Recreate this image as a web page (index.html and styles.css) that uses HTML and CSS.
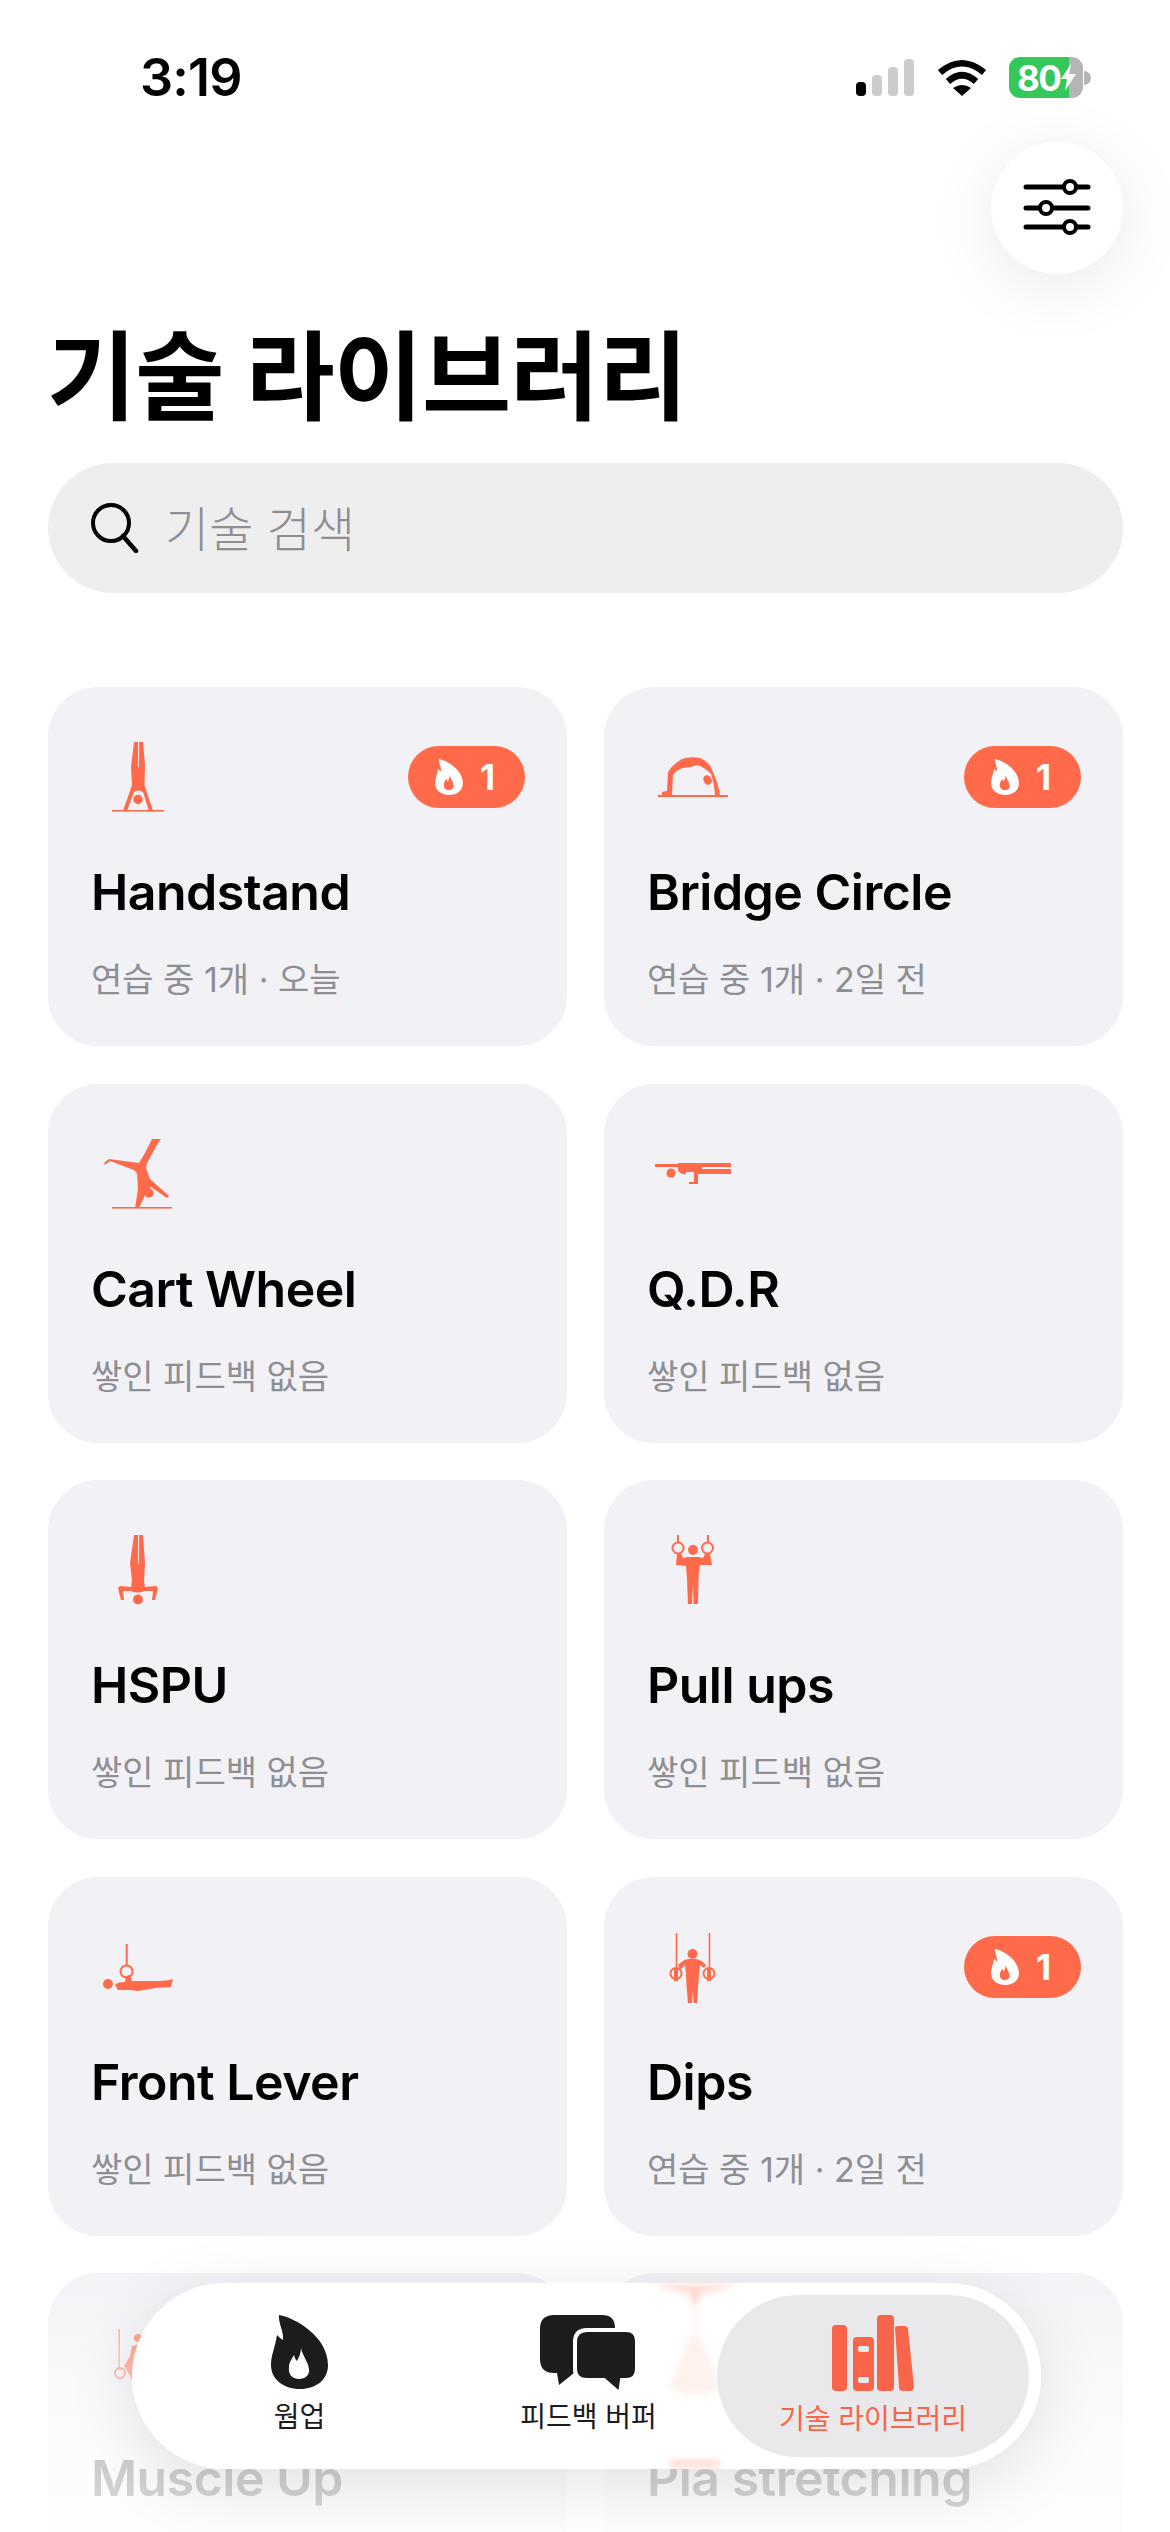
FILE: index.html
```html
<!DOCTYPE html>
<html lang="ko">
  <head>
    <meta charset="UTF-8" />
    <meta name="viewport" content="width=device-width, initial-scale=1.0" />
    <title>기술 라이브러리</title>

    <link rel="stylesheet" href="styles.css">
  </head>
  <body>
    <!-- Shared icons -->
    <svg class="sprite" width="0" height="0">
      <symbol id="flame" viewBox="0 0 57 74">
        <path fill-rule="evenodd" d="M8 0C25 3 57 22 57 50C57 65 45 74 29 74C12 74 0 64 0 50C0 40 4 33 6 20C8 22 10 24 12 25C13 16 7 8 8 0ZM30 33C31 40 37 46 38 54C39 60 34 64 28 64C21 64 17 59 18 52C18 47 21 44 23 40C24 44 25 45 26 46C28 42 30 38 30 33Z" />
      </symbol>
    </svg>

    <div class="page">
      <header class="status-bar">
        <span class="time">3:19</span>
        <div class="status-icons">
          <div class="signal">
            <span class="bar bar-1"></span>
            <span class="bar bar-2"></span>
            <span class="bar bar-3"></span>
            <span class="bar bar-4"></span>
          </div>
          <svg class="wifi" width="50" height="37" viewBox="0 0 50 37">
            <path d="M3 13.5Q25 -5 47 13.5" fill="none" stroke="#000" stroke-width="6.5" />
            <path d="M11 22.5Q25 10 39 22.5" fill="none" stroke="#000" stroke-width="6.5" />
            <path d="M16 29Q25 23 34 29L25 37Z" />
          </svg>
          <div class="battery">
            <div class="battery-body">
              <span class="battery-level">80</span>
              <svg class="bolt" width="15" height="27" viewBox="0 0 15 27">
                <path d="M10 0L0 15H6L4 27L15 10H8Z" fill="#fff" />
              </svg>
            </div>
            <span class="battery-cap"></span>
          </div>
        </div>
      </header>

      <div class="toolbar">
        <button class="filter-btn">
          <svg width="68" height="60" viewBox="0 0 68 60">
            <g stroke="#000" stroke-width="5" stroke-linecap="round">
              <path d="M3 9H65" />
              <path d="M3 30H65" />
              <path d="M3 49H65" />
            </g>
            <g fill="#fff" stroke="#000" stroke-width="4">
              <circle cx="47" cy="9" r="6" />
              <circle cx="23" cy="30" r="6" />
              <circle cx="47" cy="49" r="6" />
            </g>
          </svg>
        </button>
      </div>

      <h1 class="page-title">기술 라이브러리</h1>

      <div class="search">
        <svg width="50" height="50" viewBox="0 0 50 50">
          <circle cx="22" cy="20" r="18" fill="none" stroke="#000" stroke-width="4" />
          <path d="M34 33L47 48" stroke="#000" stroke-width="4.5" stroke-linecap="round" />
        </svg>
        <span class="search-text">기술 검색</span>
      </div>

      <main class="cards">
        <!-- Handstand -->
        <article class="card">
          <div class="card-top">
            <svg class="skill-icon" viewBox="0 0 100 100">
              <path d="M44 22L48 22L48.2 47L49 47L49.2 22L53 22L55 45L54.5 65L63 91L59 91L53 72Q48.5 69 44 72L37 91L33 91L42 65L41 47Z" />
              <circle cx="48" cy="79.5" r="4.7" />
              <rect x="22" y="90" width="52" height="1.6" />
            </svg>
            <span class="badge"><svg class="badge-flame" width="28" height="36"><use href="#flame" /></svg>1</span>
          </div>
          <h2 class="card-name">Handstand</h2>
          <p class="card-sub">연습 중 1개 · 오늘</p>
        </article>

        <!-- Bridge Circle -->
        <article class="card">
          <div class="card-top">
            <svg class="skill-icon" viewBox="6 0 100 100">
              <path d="M22 72L27 71L28 52Q33 44 42 39Q50 36 60 38Q69 41 72 50Q78 62 80 75L75 75Q74 62 71 54Q64 47 57 45Q50 48 43 48Q36 50 33 55L32 75L22 75Z" />
              <ellipse cx="67.5" cy="60" rx="4" ry="5" transform="rotate(-25 67.5 60)" />
              <rect x="18" y="75" width="70" height="2" />
            </svg>
            <span class="badge"><svg class="badge-flame" width="28" height="36"><use href="#flame" /></svg>1</span>
          </div>
          <h2 class="card-name">Bridge Circle</h2>
          <p class="card-sub">연습 중 1개 · 2일 전</p>
        </article>

        <!-- Cart Wheel -->
        <article class="card">
          <div class="card-top">
            <svg class="skill-icon" viewBox="0 -4 100 100">
              <path d="M62 18L71 18L68 22L57 42L56 47L60 58L79 75L77 77L61 66L56 72L49 87L45 87L48 68L47 52L44 49L20 40L15 44L14 42L19 38L49 42L55 32Z" />
              <circle cx="59" cy="72" r="4.7" />
              <rect x="22" y="86" width="60" height="1.6" />
            </svg>
          </div>
          <h2 class="card-name">Cart Wheel</h2>
          <p class="card-sub">쌓인 피드백 없음</p>
        </article>

        <!-- Q.D.R -->
        <article class="card">
          <div class="card-top">
            <svg class="skill-icon" viewBox="6 -4 100 100">
              <rect x="15" y="43" width="23" height="3" />
              <circle cx="31" cy="52" r="4.5" />
              <path d="M38 42H91V46H62V48H91V53H58V63H49V61H54V51H46V53H42L38 50Z" />
            </svg>
          </div>
          <h2 class="card-name">Q.D.R</h2>
          <p class="card-sub">쌓인 피드백 없음</p>
        </article>

        <!-- HSPU -->
        <article class="card">
          <div class="card-top">
            <svg class="skill-icon" viewBox="0 2 100 100">
              <path d="M44 24L48 24L48.2 53L49 53L49.2 24L53 24L55 52L54 70L55 76L66 75L68 77L65 89L62 89L63 80L55 80Q48 83 41 80L33 80L34 89L31 89L28 77L30 75L41 76L42 70L40 52Z" />
              <circle cx="48" cy="88.5" r="5" />
            </svg>
          </div>
          <h2 class="card-name">HSPU</h2>
          <p class="card-sub">쌓인 피드백 없음</p>
        </article>

        <!-- Pull ups -->
        <article class="card">
          <div class="card-top">
            <svg class="skill-icon" viewBox="6 2 100 100">
              <rect x="37" y="24" width="2" height="8" />
              <rect x="67" y="24" width="2" height="8" />
              <circle class="ring" cx="38" cy="37" r="5.5" />
              <circle class="ring" cx="67.5" cy="37" r="5.5" />
              <circle cx="53" cy="39" r="5" />
              <path d="M37 43L41 43L43 47L47 46L59 46L63 47L65 43L70 43L72 54L60 54Q59 60 58.5 66L58 93L53.5 93L53 72L52 93L48 93L47 68L46 55L36 54Z" />
            </svg>
          </div>
          <h2 class="card-name">Pull ups</h2>
          <p class="card-sub">쌓인 피드백 없음</p>
        </article>

        <!-- Front Lever -->
        <article class="card">
          <div class="card-top">
            <svg class="skill-icon" viewBox="0 -3 100 100">
              <rect x="35.7" y="31" width="2" height="22" />
              <circle class="ring" cx="36.5" cy="58.5" r="6" />
              <circle cx="18" cy="71" r="5" />
              <path d="M25 72Q27 69 35 69L36 63L40 62L42 68L70 68L80 67L83 66L81 74L65 75L48 78L40 77L28 77Z" />
            </svg>
          </div>
          <h2 class="card-name">Front Lever</h2>
          <p class="card-sub">쌓인 피드백 없음</p>
        </article>

        <!-- Dips -->
        <article class="card">
          <div class="card-top">
            <svg class="skill-icon" viewBox="6 -3 100 100">
              <rect x="35.7" y="20" width="1.6" height="34" />
              <rect x="68.7" y="20" width="1.6" height="34" />
              <circle class="ring" cx="36" cy="60.5" r="5.5" />
              <circle class="ring" cx="69" cy="60.5" r="5.5" />
              <circle cx="52.5" cy="41" r="5" />
              <rect x="34" y="56" width="4" height="12" />
              <rect x="67" y="56" width="4" height="12" />
              <path d="M38 52Q44 46 49 46L56 46Q62 47 66 52L64 55L60 52L59 62L58 75L57 90L53.5 90L53 78L52 90L48 90L46.5 72L46 62L45 52L40 57Z" />
            </svg>
            <span class="badge"><svg class="badge-flame" width="28" height="36"><use href="#flame" /></svg>1</span>
          </div>
          <h2 class="card-name">Dips</h2>
          <p class="card-sub">연습 중 1개 · 2일 전</p>
        </article>

        <!-- Muscle Up -->
        <article class="card">
          <div class="card-top">
            <svg class="skill-icon" viewBox="0 0 100 100">
              <rect x="28.5" y="23" width="1.2" height="40" />
              <circle class="ring" cx="30" cy="67" r="5" />
              <circle cx="48" cy="32" r="4" />
              <path d="M42 40L50 38L50 90L40 70L34 60L40 50Z" />
            </svg>
          </div>
          <h2 class="card-name">Muscle Up</h2>
        </article>

        <!-- Pia stretching -->
        <article class="card">
          <div class="card-top">
            <svg class="skill-icon" viewBox="6 0 100 100">
              <circle cx="54" cy="32" r="5" />
              <path d="M50 38H58L62 60L74 86H34L46 60Z" />
            </svg>
          </div>
          <h2 class="card-name">Pia stretching</h2>
        </article>
      </main>

      <div class="fade"></div>

      <nav class="tabbar">
        <!-- Pia stretching figure showing through the glass -->
        <svg class="glass-figure" width="90" height="186" viewBox="0 0 90 186">
          <path class="glass-strong" d="M2 2H88L52 10L45 14L38 10Z" />
          <circle class="glass-strong" cx="45" cy="16" r="5" />
          <rect x="43" y="24" width="4" height="24" />
          <path d="M37 60Q45 42 53 60L70 105Q45 118 20 105Z" />
          <rect class="glass-strong" x="20" y="177" width="50" height="7" rx="3" />
        </svg>

        <a class="tab tab-warmup">
          <svg width="57" height="74" fill="#1c1c1e"><use href="#flame" /></svg>
          <span class="tab-label">웜업</span>
        </a>
        <a class="tab tab-buffer">
          <svg width="97" height="77" viewBox="0 0 97 77">
            <path fill="#1c1c1e" d="M14 0H62Q75 0 75 13V58H34L19 70L17 58H14Q0 58 0 44V14Q0 0 14 0Z" />
            <path fill="#1c1c1e" stroke="#fff" stroke-width="4" d="M47 15H86Q97 15 97 26V54Q97 65 86 65H82L80 79L64 65H47Q35 65 35 54V27Q35 15 47 15Z" />
          </svg>
          <span class="tab-label">피드백 버퍼</span>
        </a>
        <a class="tab tab-active">
          <svg width="82" height="76" viewBox="0 0 82 76">
            <rect x="0" y="10" width="15" height="66" rx="4" />
            <rect x="21" y="22" width="21" height="54" rx="4" />
            <rect x="45" y="0" width="17" height="76" rx="4" />
            <path d="M63 13Q63 11 66 11L72 11Q76 11 76 14L82 72Q82 76 78 76L71 76Q67 76 67 72Z" />
            <rect class="book-label" x="26" y="31" width="11" height="6" rx="2" />
            <rect class="book-label" x="26" y="62" width="11" height="6" rx="2" />
          </svg>
          <span class="tab-label">기술 라이브러리</span>
        </a>
      </nav>
    </div>
  </body>
</html>
```

FILE: styles.css
```css
* {
  box-sizing: border-box;
}

body {
  background-color: #fff;
  margin: 0;
  overflow: hidden;
  font-family: Inter, 'Noto Sans CJK KR', sans-serif;
  color: #000;
}

h1,
h2,
p {
  margin: 0;
}

.sprite {
  position: absolute;
}

.page {
  position: relative;
  height: 2532px;
  overflow: hidden;
  padding: 0 47px 0 48px;
}

/* Status bar */

.status-bar {
  display: flex;
  justify-content: space-between;
  height: 142px;
  margin: 0 -47px 0 -48px;
  padding: 57px 79px 0 140px;
}

.time {
  font-size: 52px;
  font-weight: 600;
  line-height: 42px;
  letter-spacing: -0.8px;
}

.status-icons {
  display: flex;
  align-items: flex-start;
  height: 41px;
}

.signal {
  display: flex;
  align-items: flex-end;
  gap: 6px;
  height: 39px;
  margin-right: 23px;
}

.bar {
  width: 10px;
  border-radius: 4px;
  background-color: #ccc;
}

.bar-1 {
  height: 14px;
  background-color: #000;
}

.bar-2 {
  height: 21px;
}

.bar-3 {
  height: 29px;
}

.bar-4 {
  height: 37px;
}

.wifi {
  margin: 2px 22px 0 0;
}

.battery {
  display: flex;
  align-items: center;
}

.battery-body {
  display: flex;
  align-items: center;
  width: 74px;
  height: 41px;
  padding-left: 8px;
  border-radius: 11px;
  background: linear-gradient(to right, #34c759 60px, #b5b5b5 60px);
}

.battery-level {
  color: #fff;
  font-size: 35px;
  font-weight: 700;
  letter-spacing: -1.5px;
}

.bolt {
  margin-left: 1px;
  flex-shrink: 0;
}

.battery-cap {
  width: 7px;
  height: 14px;
  margin-left: 1px;
  border-radius: 0 7px 7px 0;
  background-color: #b5b5b5;
}

/* Header */

.toolbar {
  display: flex;
  justify-content: flex-end;
}

.filter-btn {
  display: flex;
  align-items: center;
  justify-content: center;
  width: 132px;
  height: 132px;
  padding: 0;
  border: 0;
  border-radius: 50%;
  background-color: #fff;
  box-shadow: 0 12px 70px rgba(0, 0, 0, 0.09);
}

.page-title {
  margin: 43px 0 0 -1px;
  font-size: 97px;
  font-weight: 700;
  line-height: 120px;
  letter-spacing: -1px;
  white-space: nowrap;
}

.search {
  display: flex;
  align-items: center;
  gap: 26px;
  height: 130px;
  margin-top: 26px;
  padding-left: 41px;
  border-radius: 65px;
  background-color: #eee;
}

.search-text {
  margin-top: -4px;
  color: #8e8e93;
  font-size: 48px;
  font-weight: 300;
}

/* Skill cards */

.cards {
  display: grid;
  grid-template-columns: 519px 519px;
  grid-auto-rows: 359px;
  gap: 37.5px 37px;
  margin-top: 94px;
}

.card {
  padding-left: 43px;
  border-radius: 50px;
  background-color: #f1f1f6;
}

.card-top {
  display: flex;
  justify-content: space-between;
  align-items: flex-start;
  height: 133px;
}

.skill-icon {
  width: 100px;
  height: 100px;
  margin: 33px 0 0 -1px;
  fill: #ff6b4a;
}

.skill-icon .ring {
  fill: none;
  stroke: #ff6b4a;
  stroke-width: 2;
}

.badge {
  display: flex;
  align-items: center;
  gap: 17px;
  height: 62px;
  margin: 59px 42px 0 0;
  padding: 0 30px 0 27px;
  border-radius: 31px;
  background-color: #ff6b4a;
  color: #fff;
  font-size: 35px;
  font-weight: 700;
}

.badge-flame {
  fill: #fff;
}

.card-name {
  margin-top: 42px;
  font-size: 50px;
  font-weight: 600;
  line-height: 60px;
  letter-spacing: -0.5px;
}

.card-sub {
  margin-top: 36px;
  color: #8e8e93;
  font-size: 34px;
  font-weight: 400;
  line-height: 44px;
}

/* Bottom fade and tab bar */

.fade {
  position: absolute;
  left: 0;
  right: 0;
  bottom: 0;
  height: 300px;
  background: linear-gradient(to bottom, rgba(255, 255, 255, 0), rgba(255, 255, 255, 0.35) 30%, rgba(255, 255, 255, 0.6) 50%, rgba(255, 255, 255, 0.8) 75%, rgba(255, 255, 255, 0.85));
}

.tabbar {
  position: absolute;
  left: 132px;
  top: 2283px;
  display: grid;
  grid-template-columns: 313px 261px 312px;
  width: 909px;
  height: 186px;
  padding: 12px 11px;
  border-radius: 93px;
  background-color: rgba(255, 255, 255, 0.97);
  box-shadow: 0 16px 70px rgba(0, 0, 0, 0.11);
}

.glass-figure {
  position: absolute;
  left: 518px;
  top: 0;
  fill: #fff1ed;
  filter: blur(3px);
}

.glass-strong {
  fill: #ffd9cf;
}

.tab {
  position: relative;
  display: flex;
  flex-direction: column;
  align-items: center;
  padding-top: 20px;
  color: #1c1c1e;
}

.tab-label {
  margin-top: 10px;
  font-size: 28px;
  line-height: 36px;
  white-space: nowrap;
}

.tab-buffer {
  padding-left: 4px;
}

.tab-buffer svg {
  margin-bottom: -3px;
}

.tab-active {
  border-radius: 81px;
  background-color: #e9e9eb;
  color: #f9654a;
  fill: #f9654a;
}

.book-label {
  fill: #e9e9eb;
}
```
